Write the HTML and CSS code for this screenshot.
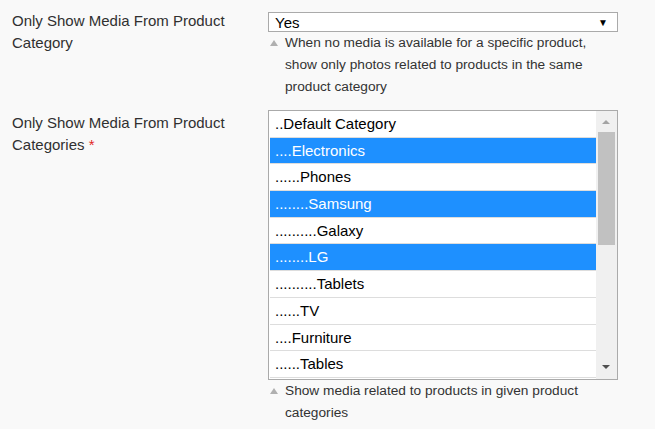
FILE: index.html
```html
<!DOCTYPE html>
<html>
	<head>
		<meta charset="utf-8">
		<title>Media settings</title>
		<link rel="stylesheet" href="styles.css">
	</head>
	<body>
		<div class="field first">
			<label class="label">Only Show Media From Product Category</label>
			<div class="control">
				<div class="select">
					<span>Yes</span>
					<span class="caret">&#9660;</span>
				</div>
				<p class="note">When no media is available for a specific product, show only photos related to products in the same product category</p>
			</div>
		</div>
		<div class="field second">
			<label class="label">Only Show Media From Product Categories <em>*</em></label>
			<div class="control">
				<div class="listbox">
					<ul class="options">
						<li>..Default Category</li>
						<li class="active">....Electronics</li>
						<li>......Phones</li>
						<li class="active">........Samsung</li>
						<li>..........Galaxy</li>
						<li class="active">........LG</li>
						<li>..........Tablets</li>
						<li>......TV</li>
						<li>....Furniture</li>
						<li>......Tables</li>
					</ul>
					<div class="scrollbar">
						<span class="arrow up"></span>
						<span class="thumb"></span>
						<span class="arrow down"></span>
					</div>
				</div>
				<p class="note">Show media related to products in given product categories</p>
			</div>
		</div>
	</body>
</html>
```
FILE: styles.css
```css
body {
	margin: 0;
	background: #f9f9f9;
	font-family: "Liberation Sans", Arial, sans-serif;
	color: #303030;
}
ul {
	margin: 0;
	padding: 0;
	list-style: none;
}
.field {
	display: grid;
	grid-template-columns: 268px 350px;
	padding-top: 12px;
}
.label {
	padding: 0 0 0 12px;
	width: 225px;
	font-size: 15px;
	line-height: 22px;
}
.first .label {
	margin-top: -2px;
}
.second .label {
	margin-top: 2px;
}
.label em {
	font-style: normal;
	color: #e22626;
}
.select {
	display: flex;
	justify-content: space-between;
	align-items: center;
	height: 20px;
	box-sizing: border-box;
	padding: 0 9px 0 6px;
	border: 1px solid #aaa;
	background: #fff;
	color: #000;
	font-size: 15px;
}
.caret {
	font-size: 10px;
}
.note {
	position: relative;
	margin: 0;
	padding-left: 17px;
	font-size: 13.7px;
	line-height: 22px;
	color: #333;
}
.note::before {
	content: "";
	position: absolute;
	left: 2px;
	top: 8px;
	border: 4px solid transparent;
	border-top: 0;
	border-bottom: 6px solid #b0b0b0;
}
.listbox {
	display: flex;
	height: 270px;
	box-sizing: border-box;
	border: 1px solid #aaa;
	background: #fff;
}
.options {
	flex: 1;
	padding: 0 0 0 1px;
}
.options li {
	height: 26.7px;
	box-sizing: border-box;
	padding: 0 5px;
	border-bottom: 1px solid #ddd;
	font-size: 15px;
	line-height: 25.7px;
	color: #000;
	white-space: nowrap;
}
.options .active {
	background: #1e90ff;
	color: #fff;
}
.scrollbar {
	display: flex;
	flex-direction: column;
	align-items: center;
	width: 21px;
	background: #f0f0f0;
}
.arrow {
	display: block;
	height: 21px;
	width: 17px;
	position: relative;
}
.arrow::after {
	content: "";
	position: absolute;
	left: 4px;
	border: 4px solid transparent;
}
.up::after {
	top: 9px;
	border-top: 0;
	border-bottom: 4px solid #a3a3a3;
}
.down {
	margin-top: auto;
}
.down::after {
	top: 7px;
	border-bottom: 0;
	border-top: 4px solid #505050;
}
.thumb {
	display: block;
	width: 17px;
	height: 113px;
	background: #c1c1c1;
}
```
